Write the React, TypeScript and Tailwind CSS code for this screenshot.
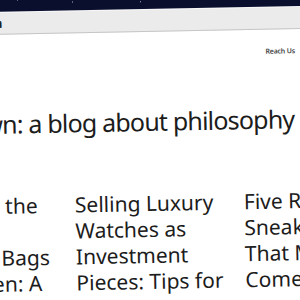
import React from 'react';

const stars = [
  { x: 40, y: 3 }, { x: 95, y: 6 }, { x: 150, y: 2 }, { x: 163, y: 7 },
  { x: 205, y: 4 }, { x: 262, y: 2 }, { x: 300, y: 5 }, { x: 322, y: 3 },
];

const posts = [
  { title: 'Exploring the World of Designer Bags for Women: A Guide' },
  { title: 'Selling Luxury Watches as Investment Pieces: Tips for Success' },
  { title: 'Five Rare Sneakers Now That Might Come Back' },
];

export default function App() {
  return (
    <div className="w-[300px] h-[300px] overflow-hidden bg-white" style={{ fontFamily: '"Noto Sans", "Open Sans", sans-serif' }}>
      <div className="w-[340px] -ml-[20px] -mt-[6px] -rotate-[1.1deg]">
        {/* top strip */}
        <div className="relative h-[15px] bg-[#0a0f2e]">
          {stars.map((s, i) => (
            <span
              key={i}
              className="absolute w-px h-px bg-white/70"
              style={{ left: s.x, top: s.y }}
            />
          ))}
        </div>
        <div className="h-px bg-[#f7f7f9]" />
        <div className="h-[22px] bg-[#ebebeb] border-b border-[#c6c6c6] flex items-center">
          <div className="w-[25px] flex justify-end">
            <span className="whitespace-nowrap text-[13px] font-bold text-[#222]">Downtown</span>
          </div>
        </div>

        {/* nav */}
        <div className="flex justify-end pr-[23px] pt-[17px]">
          <span className="text-[7px] font-semibold tracking-[-0.2px] text-[#444]">Reach Us</span>
        </div>

        {/* title */}
        <div className="flex mt-[46px]">
          <div className="w-[315px] flex justify-end shrink-0">
            <h1 className="whitespace-nowrap text-[25px] leading-[30px] tracking-[-0.8px] text-[#1c1c1c]">Downtown: a blog about philosophy</h1>
          </div>
        </div>

        {/* posts */}
        <div className="flex gap-[19px] mt-[54px] -ml-[75px]">
          {posts.map((p) => (
            <div key={p.title} className="w-[150px] shrink-0">
              <h2 className="text-[21px] leading-[26px] text-[#1c1c1c]">{p.title}</h2>
            </div>
          ))}
        </div>
      </div>
    </div>
  );
}
